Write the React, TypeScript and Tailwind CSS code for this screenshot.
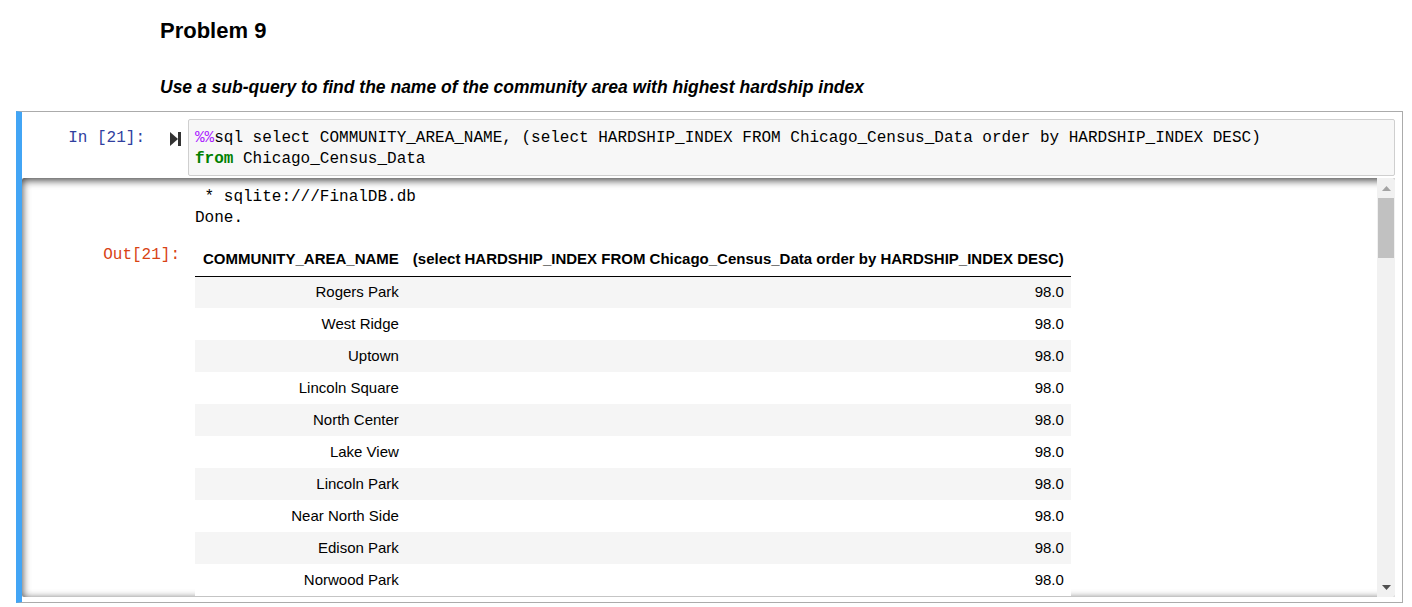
import React from 'react';

const rows = [
  'Rogers Park',
  'West Ridge',
  'Uptown',
  'Lincoln Square',
  'North Center',
  'Lake View',
  'Lincoln Park',
  'Near North Side',
  'Edison Park',
  'Norwood Park',
];

const mono = { fontFamily: '"Liberation Mono", "DejaVu Sans Mono", monospace' };

function RunIcon() {
  return (
    <svg width="11" height="14" viewBox="0 0 11 14" className="block">
      <path d="M0 0 L8 7 L0 14 Z" fill="#333" />
      <rect x="8" y="0" width="3" height="14" fill="#333" />
    </svg>
  );
}

function Scrollbar() {
  return (
    <div className="w-[18px] shrink-0 bg-[#f1f1f1] flex flex-col items-center relative z-10">
      <div className="h-[20px] w-full flex items-center justify-center">
        <svg width="9" height="5" viewBox="0 0 9 5">
          <path d="M0 5 L4.5 0 L9 5 Z" fill="#a3a3a3" />
        </svg>
      </div>
      <div className="w-[16px] h-[60px] bg-[#c1c1c1]" />
      <div className="flex-1" />
      <div className="h-[20px] w-full flex items-center justify-center">
        <svg width="9" height="5" viewBox="0 0 9 5">
          <path d="M0 0 L4.5 5 L9 0 Z" fill="#505050" />
        </svg>
      </div>
    </div>
  );
}

export default function App() {
  return (
    <div
      className="w-[1412px] h-[607px] overflow-hidden bg-white text-black"
      style={{ fontFamily: '"Liberation Sans", Arial, sans-serif' }}
    >
      <h2 className="pl-[160px] pt-[17px] text-[22px] font-bold leading-[28px]">Problem 9</h2>
      <p className="pl-[160px] mt-[32px] text-[17.5px] font-bold italic leading-[20px]">
        Use a sub-query to find the name of the community area with highest hardship index
      </p>

      <div className="ml-[16px] mr-[9px] mt-[14px] border border-[#ababab] border-l-[6px] border-l-[#42a5f5] pt-[7px] pr-[7px] pb-[5px]">
        {/* input */}
        <div className="flex">
          <div className="w-[166px] shrink-0 flex items-start pt-[9px]">
            <div className="w-[123px] text-right text-[16px] leading-[21px] text-[#303f9f]" style={mono}>
              In&nbsp;[21]:
            </div>
            <div className="ml-[25px] pt-[4px]">
              <RunIcon />
            </div>
          </div>
          <div
            className="flex-1 bg-[#f7f7f7] border border-[#cfcfcf] rounded-[2px] px-[6px] pt-[8px] pb-[5px] text-[16px] leading-[21px] whitespace-pre"
            style={mono}
          >
            <div>
              <span className="text-[#aa22ff]">%%</span>sql select COMMUNITY_AREA_NAME, (select HARDSHIP_INDEX FROM Chicago_Census_Data order by HARDSHIP_INDEX DESC)
            </div>
            <div>
              <span className="text-[#008000] font-bold">from</span> Chicago_Census_Data
            </div>
          </div>
        </div>

        {/* output */}
        <div className="mt-[2px] h-[419px] flex rounded-[2px] overflow-hidden shadow-[inset_0_2px_8px_rgba(0,0,0,0.8)]">
          <div className="flex-1 overflow-hidden">
            <div className="flex pt-[9px]">
              <div className="w-[166px] shrink-0" />
              <div className="pl-[7px] text-[16px] leading-[21px] whitespace-pre text-black" style={mono}>
                <div> * sqlite:///FinalDB.db</div>
                <div>Done.</div>
              </div>
            </div>
            <div className="flex pt-[14px]">
              <div
                className="w-[166px] shrink-0 pr-[8px] pt-[2px] text-right text-[16px] leading-[21px] text-[#d84315]"
                style={mono}
              >
                Out[21]:
              </div>
              <div className="pl-[7px]">
                <table className="border-collapse text-[15px]">
                  <thead>
                    <tr className="border-b border-black">
                      <th className="h-[33px] pl-[8px] pr-[7px] text-right font-bold align-middle">COMMUNITY_AREA_NAME</th>
                      <th className="h-[33px] px-[7px] text-right font-bold align-middle">
                        (select HARDSHIP_INDEX FROM Chicago_Census_Data order by HARDSHIP_INDEX DESC)
                      </th>
                    </tr>
                  </thead>
                  <tbody>
                    {rows.map((name, i) => (
                      <tr key={name} className={i % 2 === 0 ? 'bg-[#f5f5f5]' : 'bg-white'}>
                        <td className="h-[32px] pl-[8px] pr-[7px] text-right align-middle">{name}</td>
                        <td className="h-[32px] px-[7px] text-right align-middle">98.0</td>
                      </tr>
                    ))}
                  </tbody>
                </table>
              </div>
            </div>
          </div>
          <Scrollbar />
        </div>
      </div>
    </div>
  );
}
